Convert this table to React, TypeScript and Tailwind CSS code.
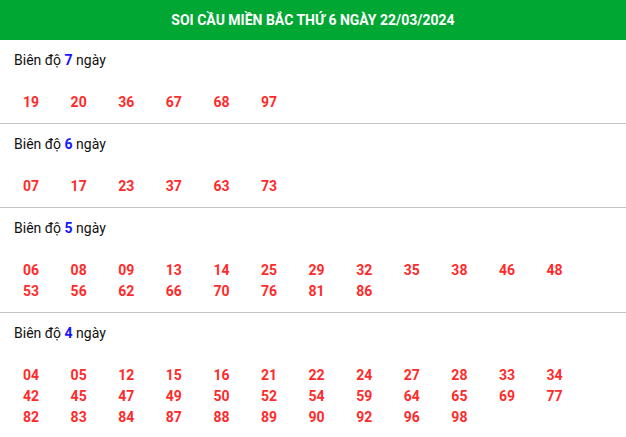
import React from 'react';

const groups: { days: number; nums: string[] }[] = [
  { days: 7, nums: ['19', '20', '36', '67', '68', '97'] },
  { days: 6, nums: ['07', '17', '23', '37', '63', '73'] },
  {
    days: 5,
    nums: ['06', '08', '09', '13', '14', '25', '29', '32', '35', '38', '46', '48', '53', '56', '62', '66', '70', '76', '81', '86'],
  },
  {
    days: 4,
    nums: [
      '04', '05', '12', '15', '16', '21', '22', '24', '27', '28', '33', '34',
      '42', '45', '47', '49', '50', '52', '54', '59', '64', '65', '69', '77',
      '82', '83', '84', '87', '88', '89', '90', '92', '96', '98',
    ],
  },
];

export default function App() {
  return (
    <div className="w-[626px] bg-white font-['Roboto',sans-serif]">
      <div className="flex h-[40px] items-center justify-center bg-[#01a733] text-[14px] font-bold text-white">
        SOI CẦU MIỀN BẮC THỨ 6 NGÀY 22/03/2024
      </div>
      {groups.map((g, i) => (
        <div key={i} className="border-b border-[#c4c4c4] pb-[10px] pt-[10px]">
          <div className="h-[20px] pl-[14px] text-[14px] leading-[20px] text-[#111]">
            Biên độ <span className="font-bold text-[#1414ff]">{g.days}</span> ngày
          </div>
          <div className="mt-[22px] grid grid-cols-[repeat(12,47.6px)] pl-[23px]">
            {g.nums.map((n, j) => (
              <span key={j} className="h-[21px] text-[14px] font-bold leading-[21px] text-[#ff2b2b]">
                {n}
              </span>
            ))}
          </div>
        </div>
      ))}
    </div>
  );
}
